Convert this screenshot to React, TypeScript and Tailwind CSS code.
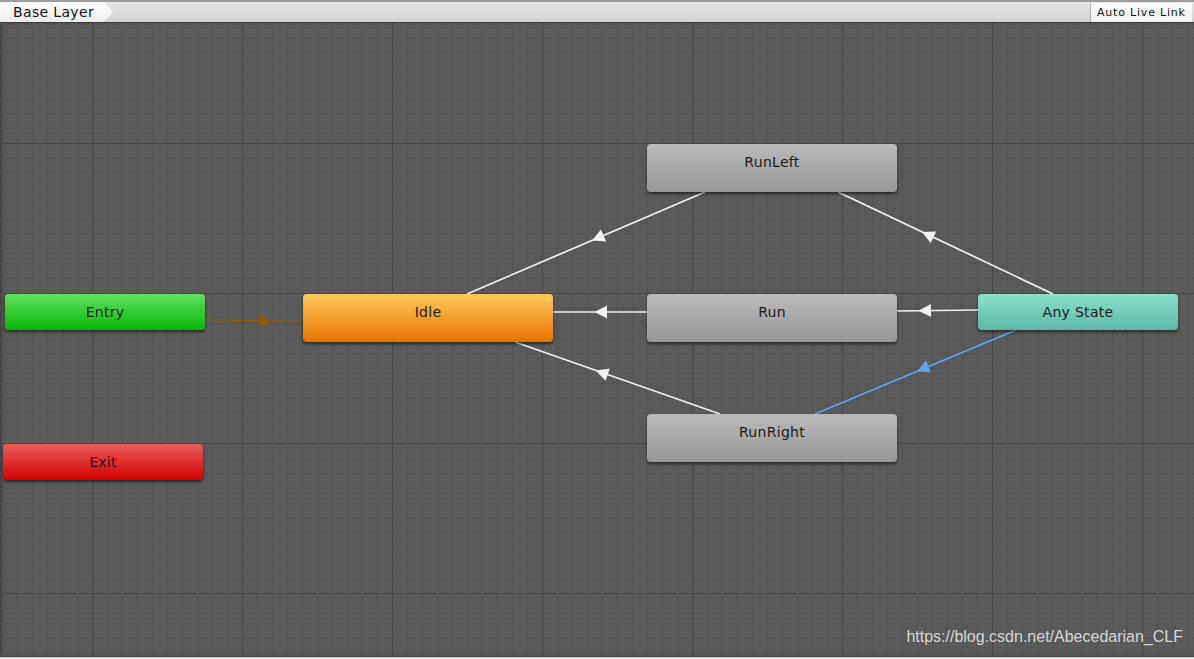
type Pt = [number, number]

type Edge = { from: Pt; to: Pt; at: number; color: string }

const nodes = [
  { label: 'Entry', cls: 'left-[5px] top-[271px] w-[200px] h-[36px] bg-[linear-gradient(#62df62,#07b807)]' },
  { label: 'Exit', cls: 'left-[3px] top-[421px] w-[200px] h-[36px] bg-[linear-gradient(#e85d5d,#d30000)]' },
  { label: 'Idle', cls: 'left-[303px] top-[271px] w-[250px] h-[48px] bg-[linear-gradient(#ffc95a,#e77300)]' },
  { label: 'RunLeft', cls: 'left-[647px] top-[121px] w-[250px] h-[48px] bg-[linear-gradient(#bababa,#979797)]' },
  { label: 'Run', cls: 'left-[647px] top-[271px] w-[250px] h-[48px] bg-[linear-gradient(#bababa,#979797)]' },
  { label: 'RunRight', cls: 'left-[647px] top-[391px] w-[250px] h-[48px] bg-[linear-gradient(#bababa,#979797)]' },
  { label: 'Any State', cls: 'left-[978px] top-[271px] w-[200px] h-[36px] bg-[linear-gradient(#8ae1ca,#5bb7a5)]' },
]

// page coordinates, arrow sits on the line at x = at
const edges: Edge[] = [
  { from: [205, 319.5], to: [303, 321.5], at: 266, color: '#8a5a06' },
  { from: [647, 312], to: [553, 312], at: 601, color: '#f2f2f2' },
  { from: [705, 192], to: [467, 294], at: 598, color: '#f2f2f2' },
  { from: [1053, 294], to: [838, 192], at: 928, color: '#f2f2f2' },
  { from: [978, 310], to: [897, 311], at: 925, color: '#f2f2f2' },
  { from: [720, 414], to: [515, 342], at: 602, color: '#f2f2f2' },
  { from: [1016, 330], to: [815, 414], at: 923, color: '#5ea6ee' },
]

function Arrow({ e }: { e: Edge }) {
  const [x1, y1] = e.from
  const [x2, y2] = e.to
  const t = (e.at - x1) / (x2 - x1)
  const cx = e.at
  const cy = y1 + (y2 - y1) * t
  const len = Math.hypot(x2 - x1, y2 - y1)
  const dx = (x2 - x1) / len
  const dy = (y2 - y1) / len
  const tip = [cx + dx * 6.5, cy + dy * 6.5]
  const b1 = [cx - dx * 6 - dy * 6.5, cy - dy * 6 + dx * 6.5]
  const b2 = [cx - dx * 6 + dy * 6.5, cy - dy * 6 - dx * 6.5]
  return (
    <g>
      <line x1={x1} y1={y1} x2={x2} y2={y2} stroke={e.color} strokeWidth={1.7} />
      <polygon points={`${tip[0]},${tip[1]} ${b1[0]},${b1[1]} ${b2[0]},${b2[1]}`} fill={e.color} />
    </g>
  )
}

function Grid() {
  const hs: number[] = []
  for (let y = 23; y <= 656; y += 15) hs.push(y)
  const vs: number[] = []
  for (let x = 2; x <= 1194; x += 15) vs.push(x)
  return (
    <g>
      {hs.map(y => (
        <line key={'h' + y} x1={0} x2={1194} y1={y + 0.5} y2={y + 0.5}
          stroke={(y - 143) % 150 === 0 ? '#474747' : '#535353'} strokeWidth={1} />
      ))}
      {vs.map(x => (
        <line key={'v' + x} x1={x + 0.5} x2={x + 0.5} y1={23} y2={656}
          stroke={(x - 92) % 150 === 0 ? '#474747' : '#535353'} strokeWidth={1} />
      ))}
    </g>
  )
}

export default function App() {
  return (
    <div className="w-[1194px] h-[659px] flex flex-col overflow-hidden bg-[#595959] font-['DejaVu_Sans',sans-serif]">
      <div className="h-[23px] flex items-stretch justify-between border-t-2 border-[#9c9c9c] bg-[linear-gradient(#e6e6e6,#d3d3d3)] border-b border-b-[#3a3a3a]">
        <div className="w-[114px] pl-[13px] flex items-center text-[14px] tracking-[0.35px] text-[#111] bg-[linear-gradient(#ffffff,#ececec)] [clip-path:polygon(0_0,104px_0,113px_50%,104px_100%,0_100%)]">
          Base Layer
        </div>
        <div className="mt-px mr-[2px] w-[102px] pl-[6px] pt-[2px] flex items-center text-[11px] tracking-[0.8px] text-[#111] bg-[linear-gradient(#ffffff,#f0f0f0)] border-l border-[#b5b5b5]">
          Auto Live Link
        </div>
      </div>

      <div className="relative h-[633px] bg-[#5a5a5a] shadow-[inset_3px_0_3px_rgba(0,0,0,0.25)]">
        <svg className="absolute inset-0" width={1194} height={633} viewBox="0 23 1194 633">
          <Grid />
          {edges.map((e, i) => <Arrow key={i} e={e} />)}
        </svg>

        {nodes.map(n => (
          <div key={n.label}
            className={'absolute rounded-[4px] shadow-[0_2px_3px_rgba(0,0,0,0.55)] pt-[10px] text-center text-[14px] tracking-[0.3px] leading-[17px] text-[#1b1b1b] ' + n.cls}>
            {n.label}
          </div>
        ))}

        <div className="absolute right-[11px] bottom-[9px] text-[16px] leading-[20px] text-[#d6d6d6] font-['Liberation_Sans',Arial,sans-serif]">
          https://blog.csdn.net/Abecedarian_CLF
        </div>
      </div>

      <div className="h-[3px] bg-[#dcdcdc] border-t border-[#3f3f3f]" />
    </div>
  )
}
